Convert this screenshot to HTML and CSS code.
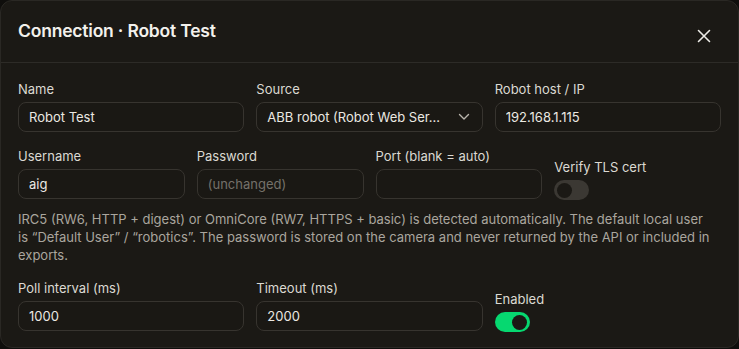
FILE: index.html
```html
<!DOCTYPE html>
<html>
    <head>
        <title>Connection · Robot Test</title>
        <link rel="stylesheet" href="styles.css">
    </head>

    <body>
        <div class="dialog">
            <header class="dialog-header">
                <h1>Connection · Robot Test</h1>
                <button class="close-btn" aria-label="Close">
                    <svg width="14" height="14" viewBox="0 0 14 14">
                        <path d="M1.5 1.5 L12.5 12.5 M12.5 1.5 L1.5 12.5" stroke="#ecebe6" stroke-width="1.6" stroke-linecap="round" fill="none"/>
                    </svg>
                </button>
            </header>
            <form class="dialog-body">
                <div class="row cols-3">
                    <div class="field">
                        <label>Name</label>
                        <input type="text" value="Robot Test">
                    </div>
                    <div class="field">
                        <label>Source</label>
                        <div class="select">
                            <span class="select-value">ABB robot (Robot Web Ser...</span>
                            <svg width="12" height="8" viewBox="0 0 12 8">
                                <path d="M1.5 1.5 L6 6 L10.5 1.5" stroke="#b9b5ad" stroke-width="1.4" fill="none" stroke-linecap="round" stroke-linejoin="round"/>
                            </svg>
                        </div>
                    </div>
                    <div class="field">
                        <label>Robot host / IP</label>
                        <input type="text" value="192.168.1.115">
                    </div>
                </div>
                <div class="row cols-4">
                    <div class="field">
                        <label>Username</label>
                        <input type="text" value="aig">
                    </div>
                    <div class="field">
                        <label>Password</label>
                        <input type="password" placeholder="(unchanged)">
                    </div>
                    <div class="field">
                        <label>Port (blank = auto)</label>
                        <input type="text">
                    </div>
                    <div class="field toggle-field">
                        <label>Verify TLS cert</label>
                        <span class="toggle"></span>
                    </div>
                </div>
                <p class="help">IRC5 (RW6, HTTP + digest) or OmniCore (RW7, HTTPS + basic) is detected automatically. The default local user is “Default User” / “robotics”. The password is stored on the camera and never returned by the API or included in exports.</p>
                <div class="row cols-3">
                    <div class="field">
                        <label>Poll interval (ms)</label>
                        <input type="text" value="1000">
                    </div>
                    <div class="field">
                        <label>Timeout (ms)</label>
                        <input type="text" value="2000">
                    </div>
                    <div class="field toggle-field">
                        <label>Enabled</label>
                        <span class="toggle on"></span>
                    </div>
                </div>
            </form>
        </div>
    </body>
</html>
```

FILE: styles.css
```css
body {
    font-family: Inter, "Noto Sans", sans-serif;
    margin: 0;
    background-color: #0f0e0c;
    color: #d9d6cf;
}

.dialog {
    width: 737px;
    height: 346px;
    background-color: #1b1915;
    border: 1px solid #2a2824;
    border-radius: 12px;
    overflow: hidden;
}

.dialog-header {
    height: 61px;
    border-bottom: 1px solid #2d2b27;
    display: flex;
    align-items: center;
    justify-content: space-between;
    padding: 0 27px 0 17px;
}

h1 {
    margin: 0 0 2px 0;
    font-size: 17.5px;
    font-weight: 600;
    color: #f3f1ec;
    letter-spacing: -0.2px;
}

.close-btn {
    background: none;
    border: none;
    padding: 0;
    margin-top: 8px;
    width: 14px;
    height: 14px;
    cursor: pointer;
}

.close-btn svg {
    display: block;
}

.dialog-body {
    padding: 18px 17px 0 17px;
    margin: 0;
}

.row {
    display: grid;
    gap: 12px;
    align-items: end;
    margin-bottom: 16px;
}

.cols-3 {
    grid-template-columns: repeat(3, 1fr);
}

.cols-4 {
    grid-template-columns: repeat(4, 1fr);
    margin-bottom: 11px;
}

.field {
    display: flex;
    flex-direction: column;
    min-width: 0;
}

.toggle-field {
    margin-bottom: -1px;
}

label {
    font-size: 13px;
    line-height: 16px;
    color: #dcd9d2;
    margin-bottom: 5px;
}

input[type="text"],
input[type="password"],
.select {
    box-sizing: border-box;
    height: 30px;
    padding: 0 10px;
    border: 1px solid #37342f;
    border-radius: 8px;
    background-color: #1a1814;
    color: #ebe8e2;
    font-family: inherit;
    font-size: 13px;
    outline: none;
    width: 100%;
}

input::placeholder {
    color: #75716a;
}

.select {
    display: flex;
    align-items: center;
    gap: 10px;
    padding-right: 12px;
}

.select-value {
    flex: 1;
    white-space: nowrap;
}

.toggle {
    position: relative;
    display: block;
    width: 35px;
    height: 20px;
    border-radius: 10px;
    background-color: #3b3833;
}

.toggle::after {
    content: "";
    position: absolute;
    top: 2.5px;
    left: 3px;
    width: 15px;
    height: 15px;
    border-radius: 50%;
    background-color: #1b1915;
}

.toggle.on {
    background-color: #06d870;
}

.toggle.on::after {
    left: 17px;
}

.help {
    margin: 0 0 16px 0;
    padding-right: 8px;
    font-size: 13px;
    line-height: 18px;
    color: #aaa69e;
}
```
